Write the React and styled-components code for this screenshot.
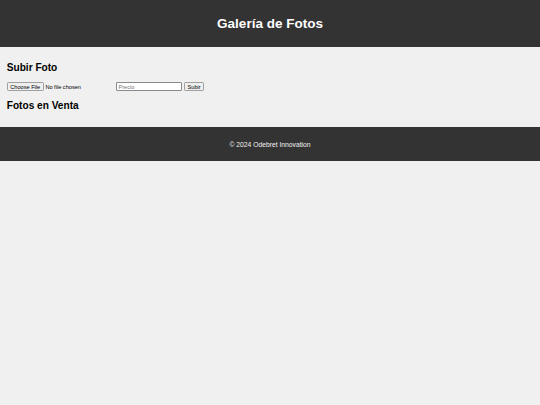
import React from "react";
import styled, { createGlobalStyle } from "styled-components";

const GlobalStyle = createGlobalStyle`
  body {
    margin: 0;
    font-family: "Liberation Sans", Arial, sans-serif;
    font-size: 6.75px;
    background-color: #f0f0f0;
  }
`;

const Header = styled.header`
  background-color: #333;
  color: #fff;
  text-align: center;
  padding: 6.8px 0;
`;

const Title = styled.h1`
  font-size: 13.5px;
  margin: 9.05px 0;
`;

const Main = styled.main`
  padding: 6.75px 6.75px 7.5px;
`;

const SectionTitle = styled.h2`
  font-size: 10.125px;
  margin: ${(props) => (props.$tight ? "7.6px 0 8.4px" : "8.4px 0")};
`;

const UploadForm = styled.form`
  display: flex;
  align-items: center;
  gap: 1.7px;
  margin-top: 3px;
  height: 11px;
`;

const FileInput = styled.input`
  font-family: "Liberation Sans", Arial, sans-serif;
  font-size: 5.625px;
  width: 107px;
  margin: 0;
  color: #000;

  &::file-selector-button {
    font-family: inherit;
    font-size: 5.625px;
    padding: 0.5px 2.5px;
    margin-right: 1.7px;
    height: 9px;
    border: 0.5px solid #a0a0a0;
    border-radius: 1.2px;
    background: #efefef;
    color: #000;
  }
`;

const PriceInput = styled.input`
  font-family: "Liberation Sans", Arial, sans-serif;
  font-size: 5.625px;
  width: 66px;
  height: 9px;
  box-sizing: border-box;
  padding: 0 1px;
  margin: 0 0 0 1px;
  border: 0.5px solid #8a8a8a;
  border-radius: 1px;
  background: #fff;

  &::placeholder {
    color: #757575;
  }
`;

const SubmitButton = styled.button`
  font-family: "Liberation Sans", Arial, sans-serif;
  font-size: 5.625px;
  height: 9px;
  width: 20px;
  padding: 0;
  margin: 0;
  border: 0.5px solid #a0a0a0;
  border-radius: 1.2px;
  background: #efefef;
  color: #000;
`;

const Gallery = styled.div``;

const Footer = styled.footer`
  background-color: #333;
  color: #f2f2f2;
  text-align: center;
  padding: 6.6px 0;
`;

const FooterText = styled.p`
  margin: 7.4px 0 7.2px;
  font-size: 6.75px;
`;

export default function App() {
  return (
    <>
      <GlobalStyle />
      <Header>
        <Title>Galería de Fotos</Title>
      </Header>
      <Main>
        <SectionTitle>Subir Foto</SectionTitle>
        <UploadForm onSubmit={(e) => e.preventDefault()}>
          <FileInput type="file" accept="image/*" />
          <PriceInput type="number" placeholder="Precio" />
          <SubmitButton type="submit">Subir</SubmitButton>
        </UploadForm>
        <SectionTitle $tight>Fotos en Venta</SectionTitle>
        <Gallery />
      </Main>
      <Footer>
        <FooterText>© 2024 Odebret Innovation</FooterText>
      </Footer>
    </>
  );
}
